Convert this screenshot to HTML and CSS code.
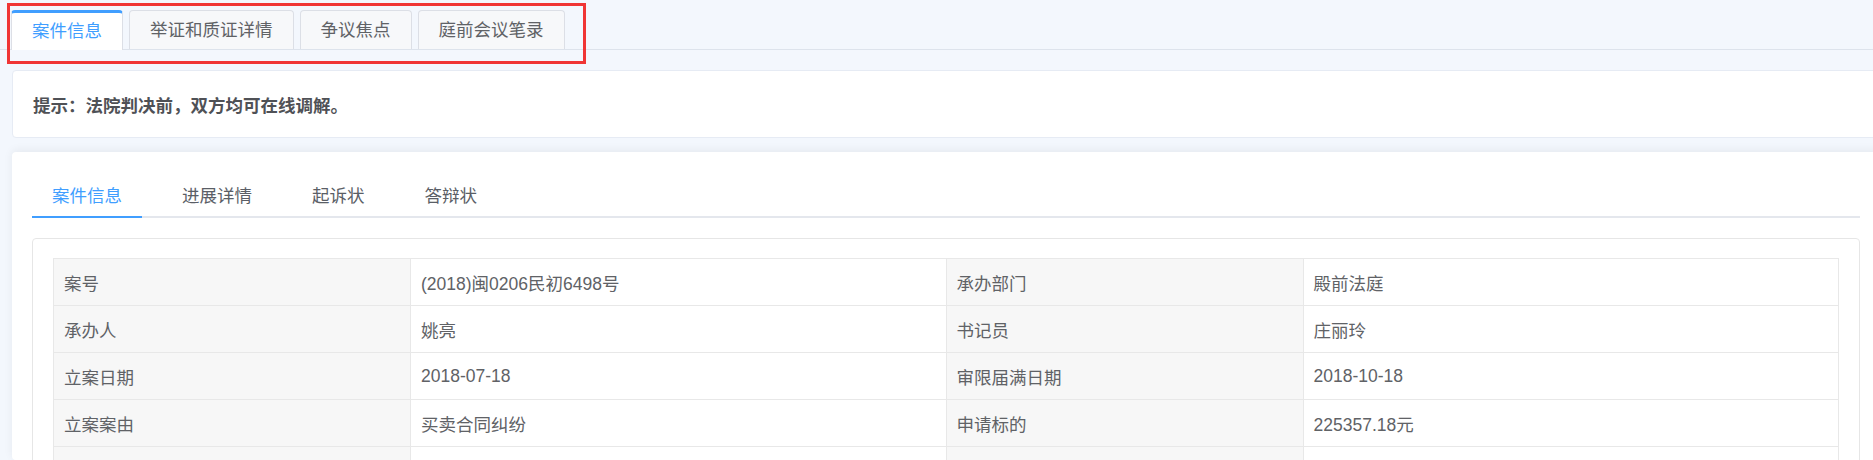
FILE: index.html
```html
<!DOCTYPE html>
<html lang="zh-CN">
<head>
<meta charset="utf-8">
<title>案件信息</title>
<link rel="stylesheet" href="styles.css">
</head>
<body>
<div class="page">
  <div class="top-tabs">
    <div class="ttab active">案件信息</div>
    <div class="ttab">举证和质证详情</div>
    <div class="ttab">争议焦点</div>
    <div class="ttab">庭前会议笔录</div>
  </div>
  <div class="highlight"></div>

  <div class="tip-card">提示：法院判决前，双方均可在线调解。</div>

  <div class="main-card">
    <div class="sub-tabs">
      <div class="stab active">案件信息</div>
      <div class="stab">进展详情</div>
      <div class="stab">起诉状</div>
      <div class="stab">答辩状</div>
    </div>
    <div class="panel">
      <table class="info">
        <colgroup>
          <col class="c-label"><col class="c-value"><col class="c-label"><col class="c-value">
        </colgroup>
        <tbody>
          <tr><td class="lbl">案号</td><td>(2018)闽0206民初6498号</td><td class="lbl">承办部门</td><td>殿前法庭</td></tr>
          <tr><td class="lbl">承办人</td><td>姚亮</td><td class="lbl">书记员</td><td>庄丽玲</td></tr>
          <tr><td class="lbl">立案日期</td><td>2018-07-18</td><td class="lbl">审限届满日期</td><td>2018-10-18</td></tr>
          <tr><td class="lbl">立案案由</td><td>买卖合同纠纷</td><td class="lbl">申请标的</td><td>225357.18元</td></tr>
          <tr><td class="lbl"></td><td></td><td class="lbl"></td><td></td></tr>
        </tbody>
      </table>
    </div>
  </div>
</div>
</body>
</html>
```
FILE: styles.css
```css
* { box-sizing: border-box; }
html, body { margin: 0; padding: 0; }
body {
  background: #f3f7fd;
  font-family: "Liberation Sans", "Noto Sans CJK SC", sans-serif;
  color: #606266;
  overflow: hidden;
  width: 1873px;
  height: 460px;
}
.page { position: relative; width: 1873px; height: 460px; overflow: hidden; }

.top-tabs {
  display: flex;
  gap: 6px;
  padding: 10px 0 0 11px;
  height: 50px;
  border-bottom: 1px solid #dde3ec;
}
.ttab {
  height: 39px;
  padding: 0 20px;
  border: 1px solid #dcdfe6;
  border-bottom: none;
  border-radius: 4px 4px 0 0;
  background: #f7f8fa;
  font-size: 17.5px;
  line-height: 38px;
  color: #606266;
  white-space: nowrap;
}
.ttab.active {
  background: #fff;
  color: #409eff;
  border-top: 3px solid #409eff;
  height: 40px;
  line-height: 36px;
}

.highlight {
  position: absolute;
  left: 7px;
  top: 3px;
  width: 579px;
  height: 61px;
  border: 3px solid #f03535;
  pointer-events: none;
}

.tip-card {
  margin: 20px 0 0 12px;
  width: 1880px;
  height: 68px;
  background: #fff;
  border: 1px solid #e6ebf4;
  border-radius: 4px;
  display: flex;
  align-items: center;
  padding-left: 20px;
  font-size: 17.5px;
  font-weight: bold;
  color: #4f5156;
}

.main-card {
  margin: 14px 0 0 12px;
  width: 1868px;
  background: #fff;
  border-radius: 4px;
  box-shadow: 0 -2px 10px rgba(0, 0, 0, 0.06);
  padding: 24px 20px 20px;
  height: 308px;
  overflow: hidden;
}

.sub-tabs {
  display: flex;
  gap: 20px;
  border-bottom: 2px solid #e4e7ed;
  height: 42px;
}
.stab {
  height: 42px;
  padding: 0 20px;
  line-height: 40px;
  font-size: 17.5px;
  color: #5a5e66;
  white-space: nowrap;
}
.stab.active {
  color: #409eff;
  border-bottom: 2px solid #409eff;
}

.panel {
  margin-top: 20px;
  border: 1px solid #e6e6e6;
  border-radius: 4px;
  padding: 19px 20px 20px;
}

.info {
  width: 100%;
  border-collapse: collapse;
  table-layout: fixed;
  font-size: 17.5px;
  color: #606266;
}
.c-label { width: 20%; }
.c-value { width: 30%; }
.info td {
  border: 1px solid #e8e8e8;
  height: 47px;
  padding: 0 10px;
  white-space: nowrap;
}
.info td.lbl { background: #f7f7f7; }
```
